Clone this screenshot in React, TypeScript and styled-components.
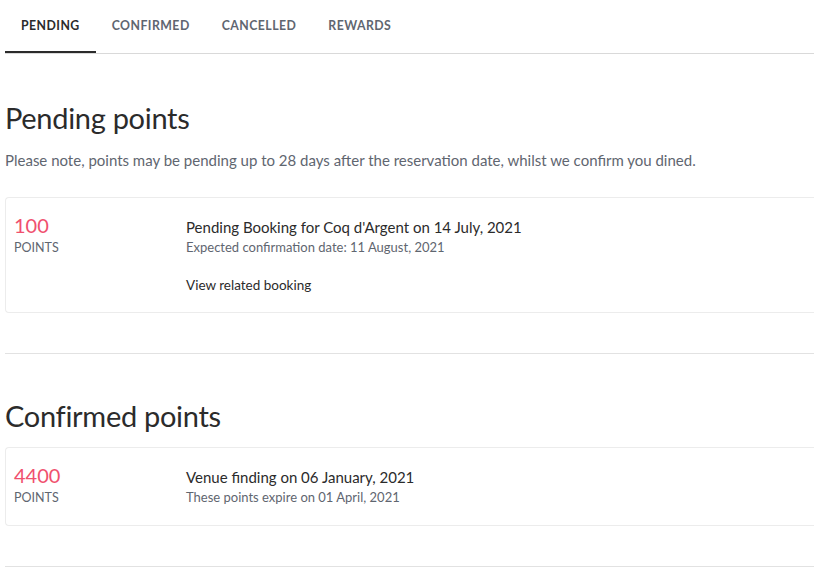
import React from 'react';
import styled, { createGlobalStyle } from 'styled-components';

const GlobalStyle = createGlobalStyle`
    body {
        margin: 0;
        background: #ffffff;
        font-family: 'Source Sans Pro', 'Lato', sans-serif;
        color: #333;
    }
`

const Page = styled.div`
    padding: 0 0 0 5px;
    width: 809px;
    overflow: hidden;
`

const TabBar = styled.div`
    display: flex;
    flex-direction: row;
    border-bottom: 1px solid #d9d9d9;
    height: 53px;
`

const Tab = styled.div<{ active?: boolean }>`
    display: flex;
    align-items: center;
    padding: 0 16px;
    height: 100%;
    box-sizing: border-box;
    font-family: 'Lato', sans-serif;
    font-weight: 700;
    font-size: 12.3px;
    letter-spacing: 0.45px;
    color: ${(p) => (p.active ? '#2b2b2b' : '#5f6670')};
    border-bottom: 2px solid ${(p) => (p.active ? '#2b2b2b' : 'transparent')};
    margin-bottom: -1px;
`

const Section = styled.section`
    display: flex;
    flex-direction: column;
`

const Heading = styled.h2`
    margin: 0;
    font-family: 'Lato', sans-serif;
    font-weight: 400;
    font-size: 29px;
    line-height: 36px;
    color: #2b2b2b;
    letter-spacing: -0.3px;
`

const Note = styled.p`
    margin: 0;
    font-size: 15px;
    line-height: 20px;
    color: #5f6670;
`

const Card = styled.div`
    display: flex;
    flex-direction: row;
    border: 1px solid #ececec;
    border-right: none;
    border-radius: 4px 0 0 4px;
    padding: 14px 0 18px 8px;
`

const PointsCol = styled.div`
    display: flex;
    flex-direction: column;
    width: 172px;
    flex-shrink: 0;
`

const PointsValue = styled.div`
    font-family: 'Lato', sans-serif;
    font-size: 20px;
    line-height: 27px;
    color: #f0506e;
`

const PointsLabel = styled.div`
    font-size: 12.5px;
    line-height: 18px;
    color: #5f6670;
    text-transform: uppercase;
`

const DetailCol = styled.div`
    display: flex;
    flex-direction: column;
`

const Title = styled.div`
    font-size: 15px;
    line-height: 22px;
    color: #2b2b2b;
    margin-top: 4px;
`

const Sub = styled.div`
    font-size: 13px;
    line-height: 19px;
    color: #5f6670;
`

const Link = styled.a`
    margin-top: 19px;
    font-size: 13.5px;
    line-height: 18px;
    color: #2b2b2b;
    text-decoration: none;
`

const Divider = styled.hr<{ top: number }>`
    border: none;
    border-top: 1px solid #e2e2e2;
    margin: ${(p) => p.top}px 0 0 0;
`

const tabs = ['Pending', 'Confirmed', 'Cancelled', 'Rewards'];

export default function App(): JSX.Element {
    return (
        <Page>
            <GlobalStyle />
            <TabBar>
                {tabs.map((t, i) => (
                    <Tab active={i === 0} key={`tab-${i}`}>{t.toUpperCase()}</Tab>
                ))}
            </TabBar>
            <Section style={{ marginTop: 46 }}>
                <Heading>Pending points</Heading>
                <Note style={{ marginTop: 14 }}>
                    Please note, points may be pending up to 28 days after the reservation date, whilst we confirm you dined.
                </Note>
                <Card style={{ marginTop: 27 }}>
                    <PointsCol>
                        <PointsValue>100</PointsValue>
                        <PointsLabel>Points</PointsLabel>
                    </PointsCol>
                    <DetailCol>
                        <Title>Pending Booking for Coq d'Argent on 14 July, 2021</Title>
                        <Sub>Expected confirmation date: 11 August, 2021</Sub>
                        <Link href="#">View related booking</Link>
                    </DetailCol>
                </Card>
            </Section>
            <Divider top={40} />
            <Section style={{ marginTop: 44 }}>
                <Heading>Confirmed points</Heading>
                <Card style={{ marginTop: 13 }}>
                    <PointsCol>
                        <PointsValue>4400</PointsValue>
                        <PointsLabel>Points</PointsLabel>
                    </PointsCol>
                    <DetailCol>
                        <Title>Venue finding on 06 January, 2021</Title>
                        <Sub>These points expire on 01 April, 2021</Sub>
                    </DetailCol>
                </Card>
            </Section>
            <Divider top={40} />
        </Page>
    );
}
